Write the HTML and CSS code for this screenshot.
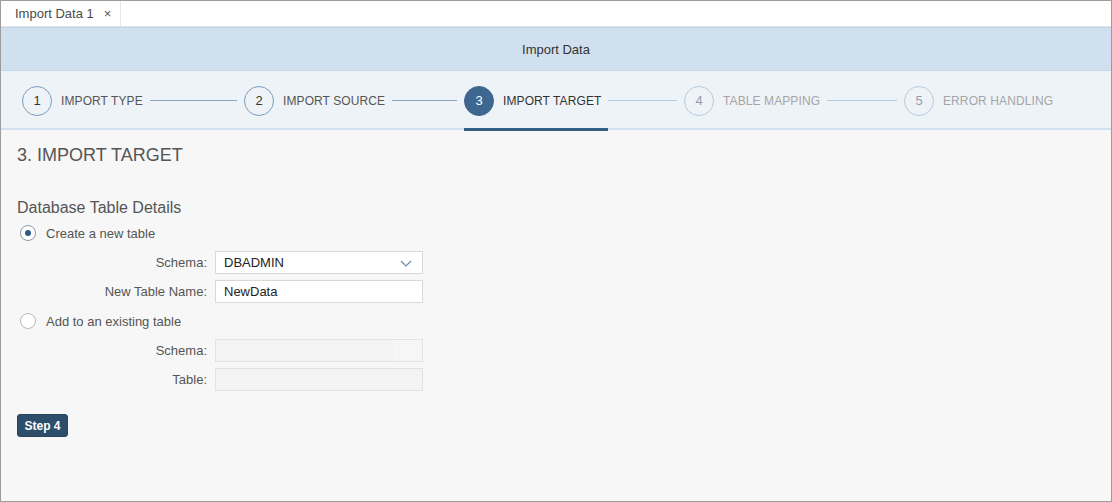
FILE: index.html
```html
<!DOCTYPE html>
<html>
<head>
<meta charset="utf-8">
<link rel="stylesheet" href="styles.css">
</head>
<body>
<div class="window">
  <div class="tabs">
    <div class="tab"><span class="tab-title">Import Data 1</span><span class="tab-close">×</span></div>
  </div>
  <div class="titlebar">Import Data</div>
  <div class="stepper">
    <div class="step done first"><div class="head"><span class="circle">1</span><span class="label">IMPORT TYPE</span></div><span class="line"></span></div>
    <div class="step done"><div class="head"><span class="circle">2</span><span class="label">IMPORT SOURCE</span></div><span class="line"></span></div>
    <div class="step active"><div class="head"><span class="circle">3</span><span class="label">IMPORT TARGET</span></div><span class="line"></span></div>
    <div class="step todo"><div class="head"><span class="circle">4</span><span class="label">TABLE MAPPING</span></div><span class="line"></span></div>
    <div class="step todo last"><div class="head"><span class="circle">5</span><span class="label">ERROR HANDLING</span></div></div>
  </div>
  <div class="content">
    <h1 class="page-title">3. IMPORT TARGET</h1>
    <h2 class="section-title">Database Table Details</h2>
    <div class="radio-row"><span class="radio checked"></span><span class="radio-label">Create a new table</span></div>
    <div class="form">
      <div class="form-row"><span class="form-label">Schema:</span><div class="input select"><span class="value">DBADMIN</span><svg class="chev" width="12" height="7" viewBox="0 0 12 7"><path d="M1 1 L6 6 L11 1" fill="none" stroke="#6b8eb2" stroke-width="1.2"/></svg></div></div>
      <div class="form-row"><span class="form-label">New Table Name:</span><div class="input"><span class="value">NewData</span></div></div>
    </div>
    <div class="radio-row second"><span class="radio"></span><span class="radio-label">Add to an existing table</span></div>
    <div class="form">
      <div class="form-row"><span class="form-label">Schema:</span><div class="input disabled select-dis"><span class="dis-btn"></span></div></div>
      <div class="form-row"><span class="form-label">Table:</span><div class="input disabled"></div></div>
    </div>
    <button class="btn">Step 4</button>
  </div>
</div>
</body>
</html>
```
FILE: styles.css
```css
html, body { margin: 0; padding: 0; }
body { font-family: "Liberation Sans", Arial, sans-serif; background: #fff; }
.window {
  width: 1112px; height: 502px; box-sizing: border-box;
  border: 1px solid #9c9c9c; background: #f7f7f7;
  display: flex; flex-direction: column; overflow: hidden;
}
.tabs { height: 26px; box-sizing: border-box; background: #fff; border-bottom: 1px solid #e4e4e4; display: flex; }
.tab { width: 120px; border-right: 1px solid #e6e6e6; display: flex; align-items: center; padding-left: 14px; box-sizing: border-box; font-size: 13px; color: #4a4a4a; }
.tab-close { margin-left: 10px; font-size: 13px; color: #555; }
.titlebar {
  height: 44px; box-sizing: border-box; background: #d1e0ee;
  border-top: 1px solid #c2d4e7; border-bottom: 1px solid #c7d8ea;
  display: flex; align-items: center; justify-content: center;
  font-size: 13px; color: #333;
}
.stepper {
  height: 59px; box-sizing: border-box; background: #eef3f8;
  border-bottom: 2px solid #d3e2f0; padding: 2px 0 0 21px;
  display: flex; align-items: stretch;
}
.step { width: 220px; display: flex; align-items: center; }
.step.first { width: 222px; }
.step.last { width: auto; }
.head { display: flex; align-items: center; height: 100%; position: relative; padding-right: 7px; }
.circle {
  width: 30px; height: 30px; box-sizing: border-box; border-radius: 50%;
  border: 1px solid #7b9dc1; display: flex; align-items: center; justify-content: center;
  font-size: 13px; color: #333; flex-shrink: 0;
}
.label { margin-left: 9px; font-size: 12px; color: #555; white-space: nowrap; letter-spacing: 0.1px; }
.line { flex: 1; height: 1px; background: #8aa6c2; margin-right: 7px; }
.step.active .circle { background: #3d6790; border-color: #3d6790; color: #fff; }
.step.active .label { color: #333; }
.step.active .head::after {
  content: ""; position: absolute; left: 0; right: 0; bottom: -3px; height: 3px; background: #345d83;
}
.step.todo .circle { border-color: #b5cbe0; color: #99a; }
.step.todo .label { color: #a5a5a5; }
.step.active .line, .step.todo .line { background: #b3c8dd; }
.content { padding: 0 16px; flex: 1; }
.page-title { margin: 14px 0 0; font-size: 18px; font-weight: normal; color: #555; line-height: 22px; }
.section-title { margin: 32px 0 0; font-size: 16px; font-weight: normal; color: #555; line-height: 20px; }
.radio-row { display: flex; align-items: center; height: 20px; margin-top: 5px; padding-left: 3px; }
.radio-row.second { margin-top: 8px; }
.radio {
  width: 16px; height: 16px; box-sizing: border-box; border-radius: 50%;
  border: 1px solid #b9b9b9; background: #fff; position: relative; flex-shrink: 0;
}
.radio.checked { border-color: #8e9aa6; }
.radio.checked::after {
  content: ""; position: absolute; left: 4px; top: 4px; width: 6px; height: 6px; border-radius: 50%; background: #2c5a85;
}
.radio-label { margin-left: 10px; font-size: 13px; color: #555; }
.form { display: flex; flex-direction: column; gap: 6px; margin-top: 8px; }
.form-row { display: flex; align-items: center; }
.form-label { width: 190px; text-align: right; font-size: 13px; color: #555; }
.input {
  margin-left: 8px; width: 208px; height: 23px; box-sizing: border-box;
  border: 1px solid #d9d9d9; background: #fff; display: flex; align-items: center;
  padding-left: 8px; font-size: 13px; color: #222; position: relative;
}
.select .chev { position: absolute; right: 10px; top: 8px; }
.input.disabled { background: #f3f3f3; border-color: #e2e2e2; padding-left: 0; }
.dis-btn { margin-left: auto; width: 29px; height: 100%; background: #f6f6f6; }
.btn {
  margin-top: 23px; width: 51px; height: 23px; border: 1px solid #26455f; border-radius: 3px;
  background: #2d4e6b; color: #fff; font-family: "Liberation Sans", Arial, sans-serif;
  font-size: 12px; font-weight: bold; padding: 0; display: flex; align-items: center; justify-content: center;
}
```
